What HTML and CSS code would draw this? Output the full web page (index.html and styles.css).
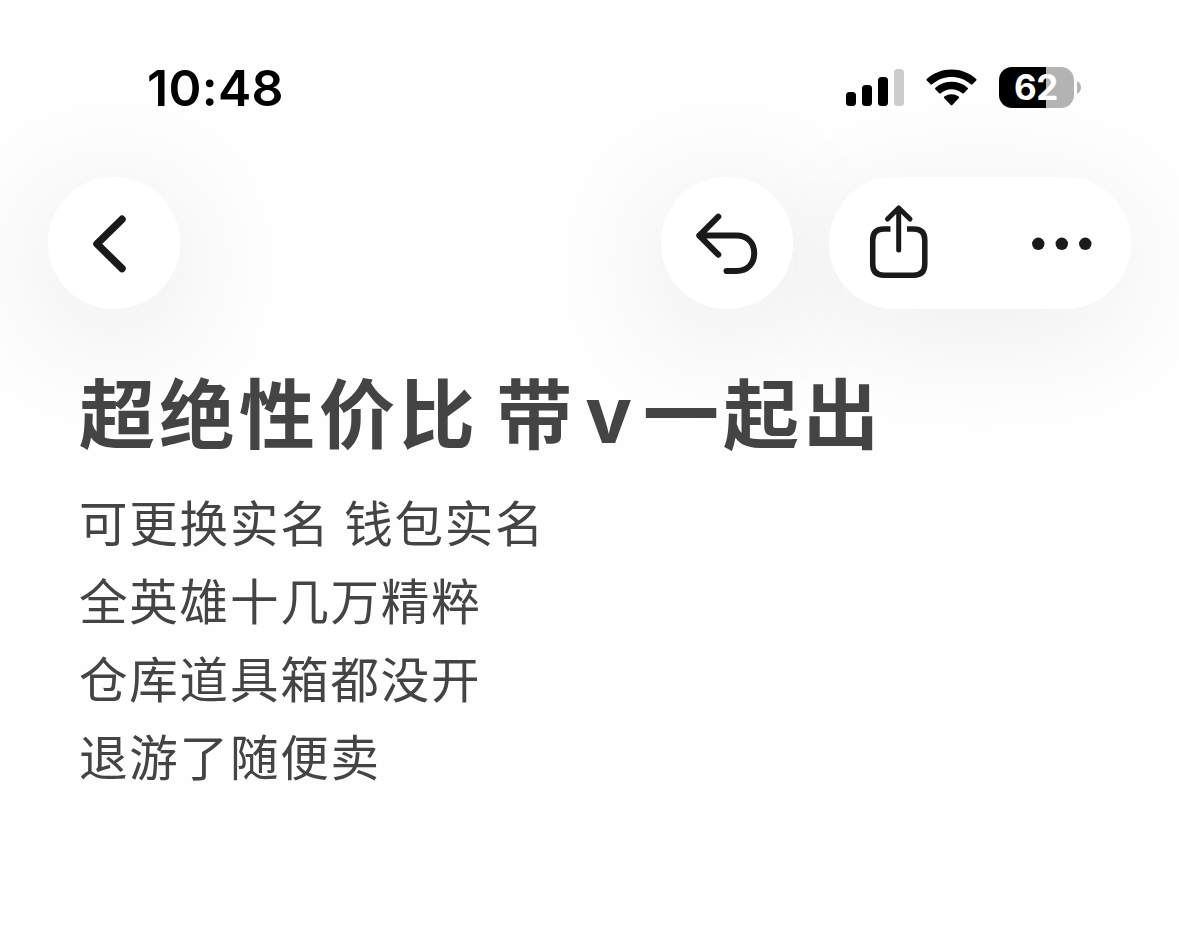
FILE: index.html
```html
<!DOCTYPE html>
<html lang="zh-CN">
<head>
	<meta charset="utf-8">
	<title>超绝性价比</title>
	<link rel="stylesheet" href="styles.css">
</head>
<body>
	<header class="status-bar">
		<span class="time">10:48</span>
		<div class="status-icons">
			<svg class="signal" width="58" height="38" viewBox="0 0 58 38">
				<rect x="0" y="23" width="10" height="14" rx="3.500"/>
				<rect x="16" y="16" width="10" height="21" rx="3.500"/>
				<rect x="32" y="8" width="10" height="29" rx="3.500"/>
				<rect class="off" x="48" y="0" width="10" height="37" rx="3.500"/>
			</svg>
			<svg class="wifi" width="52" height="38" viewBox="-0.500 0 52 38">
				<path d="M1.300 11.500 Q0.500 10.700 1.300 9.900 C15 -2.800 37 -2.800 50.700 9.900 Q51.500 10.700 50.700 11.500 L47 15.300 Q46.300 16 45.500 15.300 C34 5.500 18 5.500 6.500 15.300 Q5.700 16 5 15.300 Z"/>
				<path d="M9.800 20.200 Q9.100 19.400 9.900 18.700 C19 10.800 33 10.800 42.100 18.700 Q42.900 19.400 42.200 20.200 L38.300 24.200 Q37.600 24.900 36.800 24.200 C30 18.800 22 18.800 15.200 24.200 Q14.400 24.900 13.700 24.200 Z"/>
				<path d="M18.600 29 Q17.900 28.200 18.800 27.600 C23 24.300 29 24.300 33.200 27.600 Q34.100 28.200 33.400 29 L26.800 36 Q26 36.800 25.200 36 Z"/>
			</svg>
			<div class="battery"><span class="level">62</span></div>
			<svg class="battery-tip" width="4" height="13" viewBox="0 0 4 13">
				<path d="M0 0 C5.300 2.500 5.300 10.500 0 13 Z"/>
			</svg>
		</div>
	</header>

	<nav class="toolbar">
		<button class="btn back">
			<svg width="132" height="132" viewBox="0 0 132 132">
				<path class="thick" d="M74 42.300 L49 66.900 L74 91.500"/>
			</svg>
		</button>
		<button class="btn undo">
			<svg width="132" height="132" viewBox="0 0 132 132">
				<path d="M57.300 39.700 L38.300 58.700 L57.300 77.700 M38.300 58.500 H75.500 C86.500 58.500 93.200 66 93.200 76.200 C93.200 86.500 86.500 94 75.500 94 H65.500"/>
			</svg>
		</button>
		<div class="btn-group">
			<button class="btn share">
				<svg width="151" height="132" viewBox="0 0 151 132">
					<path class="flat" d="M61.500 52 H55 Q43.700 52 43.700 63 V87 Q43.700 98.200 55 98.200 H84.500 Q95.800 98.200 95.800 87 V63 Q95.800 52 84.500 52 H78"/>
					<path class="thin" d="M69.700 73 V31.500 M58.500 42 L69.700 31 L81 42"/>
				</svg>
			</button>
			<button class="btn more">
				<svg width="151" height="132" viewBox="0 0 151 132">
					<circle cx="58.300" cy="66.800" r="6.200"/>
					<circle cx="81.800" cy="66.800" r="6.200"/>
					<circle cx="105.300" cy="66.800" r="6.200"/>
				</svg>
			</button>
		</div>
	</nav>

	<main class="note">
		<h1>超绝性价比 带<span class="latin">v</span>一起出</h1>
		<p>可更换实名 钱包实名</p>
		<p>全英雄十几万精粹</p>
		<p>仓库道具箱都没开</p>
		<p>退游了随便卖</p>
	</main>
</body>
</html>
```
FILE: styles.css
```css
* {
	box-sizing: border-box;
}

body {
	margin: 0;
	background-color: #fefefe;
	font-family: "Noto Sans CJK SC", sans-serif;
	color: #444;
	overflow: hidden;
}

.status-bar {
	position: relative;
	z-index: 1;
	display: flex;
	justify-content: space-between;
	align-items: center;
	height: 177px;
	padding: 0 98px 2px 147px;
	font-family: Inter, sans-serif;
	color: #000;
}

.time {
	font-size: 50px;
	font-weight: 600;
	line-height: 60px;
	letter-spacing: 0.3px;
}

.status-icons {
	display: flex;
	align-items: center;
}

.signal .off {
	fill: #cccccc;
}

.wifi {
	margin: 0 22px 0 21px;
}

.battery {
	width: 75px;
	height: 41px;
	padding-right: 1px;
	border-radius: 13px;
	background: linear-gradient(to right, #000 47px, #b3b3b3 47px);
	color: #fff;
	text-align: center;
}

.level {
	font-size: 35px;
	font-weight: 700;
	line-height: 41px;
	letter-spacing: -0.3px;
}

.battery-tip {
	margin-left: 3px;
	fill: #b3b3b3;
}

.toolbar {
	position: relative;
	z-index: 0;
	display: flex;
	height: 132px;
	padding: 0 48px;
}

.btn {
	width: 132px;
	height: 132px;
	padding: 0;
	border: 0;
	border-radius: 66px;
	background-color: #fff;
}

.btn svg {
	display: block;
	fill: none;
	stroke: #1a1a1a;
	stroke-width: 6;
	stroke-linecap: round;
	stroke-linejoin: round;
}

.back,
.undo,
.btn-group {
	position: relative;
}

/* shadows sit under every button so they don't tint the next one */
.back::before,
.undo::before,
.btn-group::before {
	content: "";
	position: absolute;
	top: 0;
	right: 0;
	bottom: 0;
	left: 0;
	z-index: -1;
	border-radius: 66px;
	box-shadow: 0 22px 130px rgba(0, 0, 0, 0.1);
}

.btn-group::before {
	box-shadow: 0 24px 120px rgba(0, 0, 0, 0.07);
}

.undo {
	margin-left: auto;
	margin-right: 36px;
}

.btn-group {
	display: flex;
	width: 302px;
	border-radius: 66px;
	background-color: #fff;
}

.btn-group .btn {
	width: 151px;
	background: none;
}

.btn .thick {
	stroke-width: 7.5;
}

.btn .thin {
	stroke-width: 5;
}

.btn .flat {
	stroke-width: 5.5;
	stroke-linecap: butt;
}

.more svg {
	fill: #1a1a1a;
	stroke: none;
}

.note {
	position: relative;
	z-index: 1;
	padding: 50px 79px;
}

h1 {
	margin: 0 0 19px;
	font-size: 76px;
	line-height: 103px;
	letter-spacing: 4px;
	word-spacing: -4px;
	font-weight: 700;
	white-space: nowrap;
}

.latin {
	margin: 0 9px 0 9px;
	font-family: Inter, sans-serif;
	font-size: 78px;
	line-height: 1;
	letter-spacing: 2px;
}

p {
	margin: 0;
	font-size: 48.5px;
	line-height: 78px;
	letter-spacing: 1.8px;
	word-spacing: 1px;
}

p:first-of-type {
	margin-top: 20px;
}
```
